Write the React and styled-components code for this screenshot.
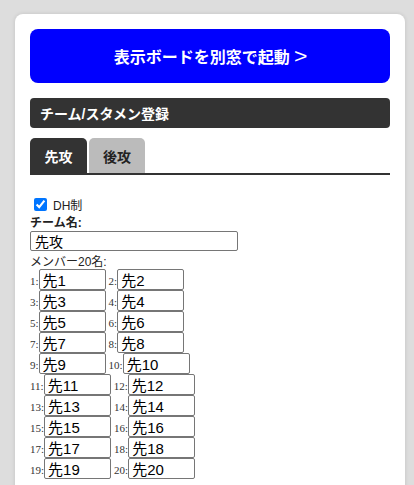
import React from "react";
import styled, { createGlobalStyle } from "styled-components";

const GlobalStyle = createGlobalStyle`
  html, body {
    margin: 0;
    padding: 0;
    background: #dddddd;
    font-family: "Liberation Sans", "Noto Sans CJK JP", sans-serif;
  }
`;

const Card = styled.div`
  box-sizing: border-box;
  width: 390px;
  min-height: 480px;
  margin: 14px 0 0 15px;
  padding: 15px;
  background: #ffffff;
  border-radius: 8px;
  box-shadow: 0 0 4px rgba(0, 0, 0, 0.12);
`;

const LaunchButton = styled.button`
  display: flex;
  align-items: center;
  justify-content: center;
  gap: 5px;
  width: 100%;
  height: 54px;
  border: none;
  border-radius: 8px;
  background: #0000ff;
  color: #ffffff;
  font-family: "Liberation Sans", "Noto Sans CJK JP", sans-serif;
  font-size: 16px;
  font-weight: bold;
  cursor: pointer;
`;

const Chevron = styled.span`
  font-size: 20px;
  font-weight: normal;
  line-height: 1;
  transform: scaleX(1.15);
`;

const SectionTitle = styled.h2`
  display: flex;
  align-items: center;
  height: 30px;
  margin: 15px 0 0;
  padding: 0 10px;
  border-radius: 4px;
  background: #333333;
  color: #ffffff;
  font-size: 14px;
  font-weight: bold;
`;

const TabBar = styled.div`
  display: flex;
  gap: 2px;
  margin-top: 10px;
  border-bottom: 2px solid #333333;
`;

const Tab = styled.button`
  width: ${({ $w }) => $w}px;
  height: 35px;
  padding: 0;
  border: none;
  border-radius: 5px 5px 0 0;
  background: ${({ $active }) => ($active ? "#333333" : "#bbbbbb")};
  color: ${({ $active }) => ($active ? "#ffffff" : "#222222")};
  font-family: "Liberation Sans", "Noto Sans CJK JP", sans-serif;
  font-size: 14px;
  font-weight: bold;
`;

const Form = styled.div`
  margin-top: 20px;
  font-size: 12px;
  color: #222222;
`;

const CheckRow = styled.label`
  display: flex;
  align-items: center;
  height: 19px;
  margin-bottom: 1px;
  input {
    width: 13px;
    height: 13px;
    margin: 0 6px 0 4px;
  }
`;

const FieldLabel = styled.div`
  height: 16px;
  line-height: 16px;
  font-weight: ${({ $bold }) => ($bold ? "bold" : "normal")};
`;

const TeamInput = styled.input`
  box-sizing: border-box;
  display: block;
  width: 208px;
  height: 20px;
  margin: 0 0 3px;
  padding: 0 4px;
  border: 1px solid #767676;
  border-radius: 2px;
  font-family: "Liberation Sans", "Noto Sans CJK JP", sans-serif;
  font-size: 14px;
  color: #000;
`;

const MemberList = styled.div`
  margin-top: -1px;
`;

const MemberRow = styled.div`
  display: flex;
  align-items: center;
  gap: 3px;
  height: 21px;
`;

const Member = styled.span`
  display: flex;
  align-items: center;
`;

const Num = styled.span`
  font-family: "Liberation Serif", serif;
  font-size: 11px;
  color: #333;
  padding-top: 3px;
`;

const MemberInput = styled.input`
  box-sizing: border-box;
  width: 67px;
  height: 21px;
  margin: 0;
  padding: 0 3px;
  border: 1px solid #767676;
  border-radius: 2px;
  font-family: "Liberation Sans", "Noto Sans CJK JP", sans-serif;
  font-size: 15px;
  color: #000;
`;

const members = Array.from({ length: 20 }, (_, i) => i + 1);
const rows = [];
for (let i = 0; i < members.length; i += 2) rows.push(members.slice(i, i + 2));

export default function App() {
  return (
    <>
      <GlobalStyle />
      <Card>
        <LaunchButton>
          表示ボードを別窓で起動<Chevron>&gt;</Chevron>
        </LaunchButton>
        <SectionTitle>チーム/スタメン登録</SectionTitle>
        <TabBar>
          <Tab $active $w={57}>先攻</Tab>
          <Tab $w={56}>後攻</Tab>
        </TabBar>
        <Form>
          <CheckRow>
            <input type="checkbox" defaultChecked />
            DH制
          </CheckRow>
          <FieldLabel $bold>チーム名:</FieldLabel>
          <TeamInput defaultValue="先攻" />
          <FieldLabel>メンバー20名:</FieldLabel>
          <MemberList>
            {rows.map((pair) => (
              <MemberRow key={pair[0]}>
                {pair.map((n) => (
                  <Member key={n}>
                    <Num>{n}:</Num>
                    <MemberInput defaultValue={`先${n}`} />
                  </Member>
                ))}
              </MemberRow>
            ))}
          </MemberList>
        </Form>
      </Card>
    </>
  );
}
